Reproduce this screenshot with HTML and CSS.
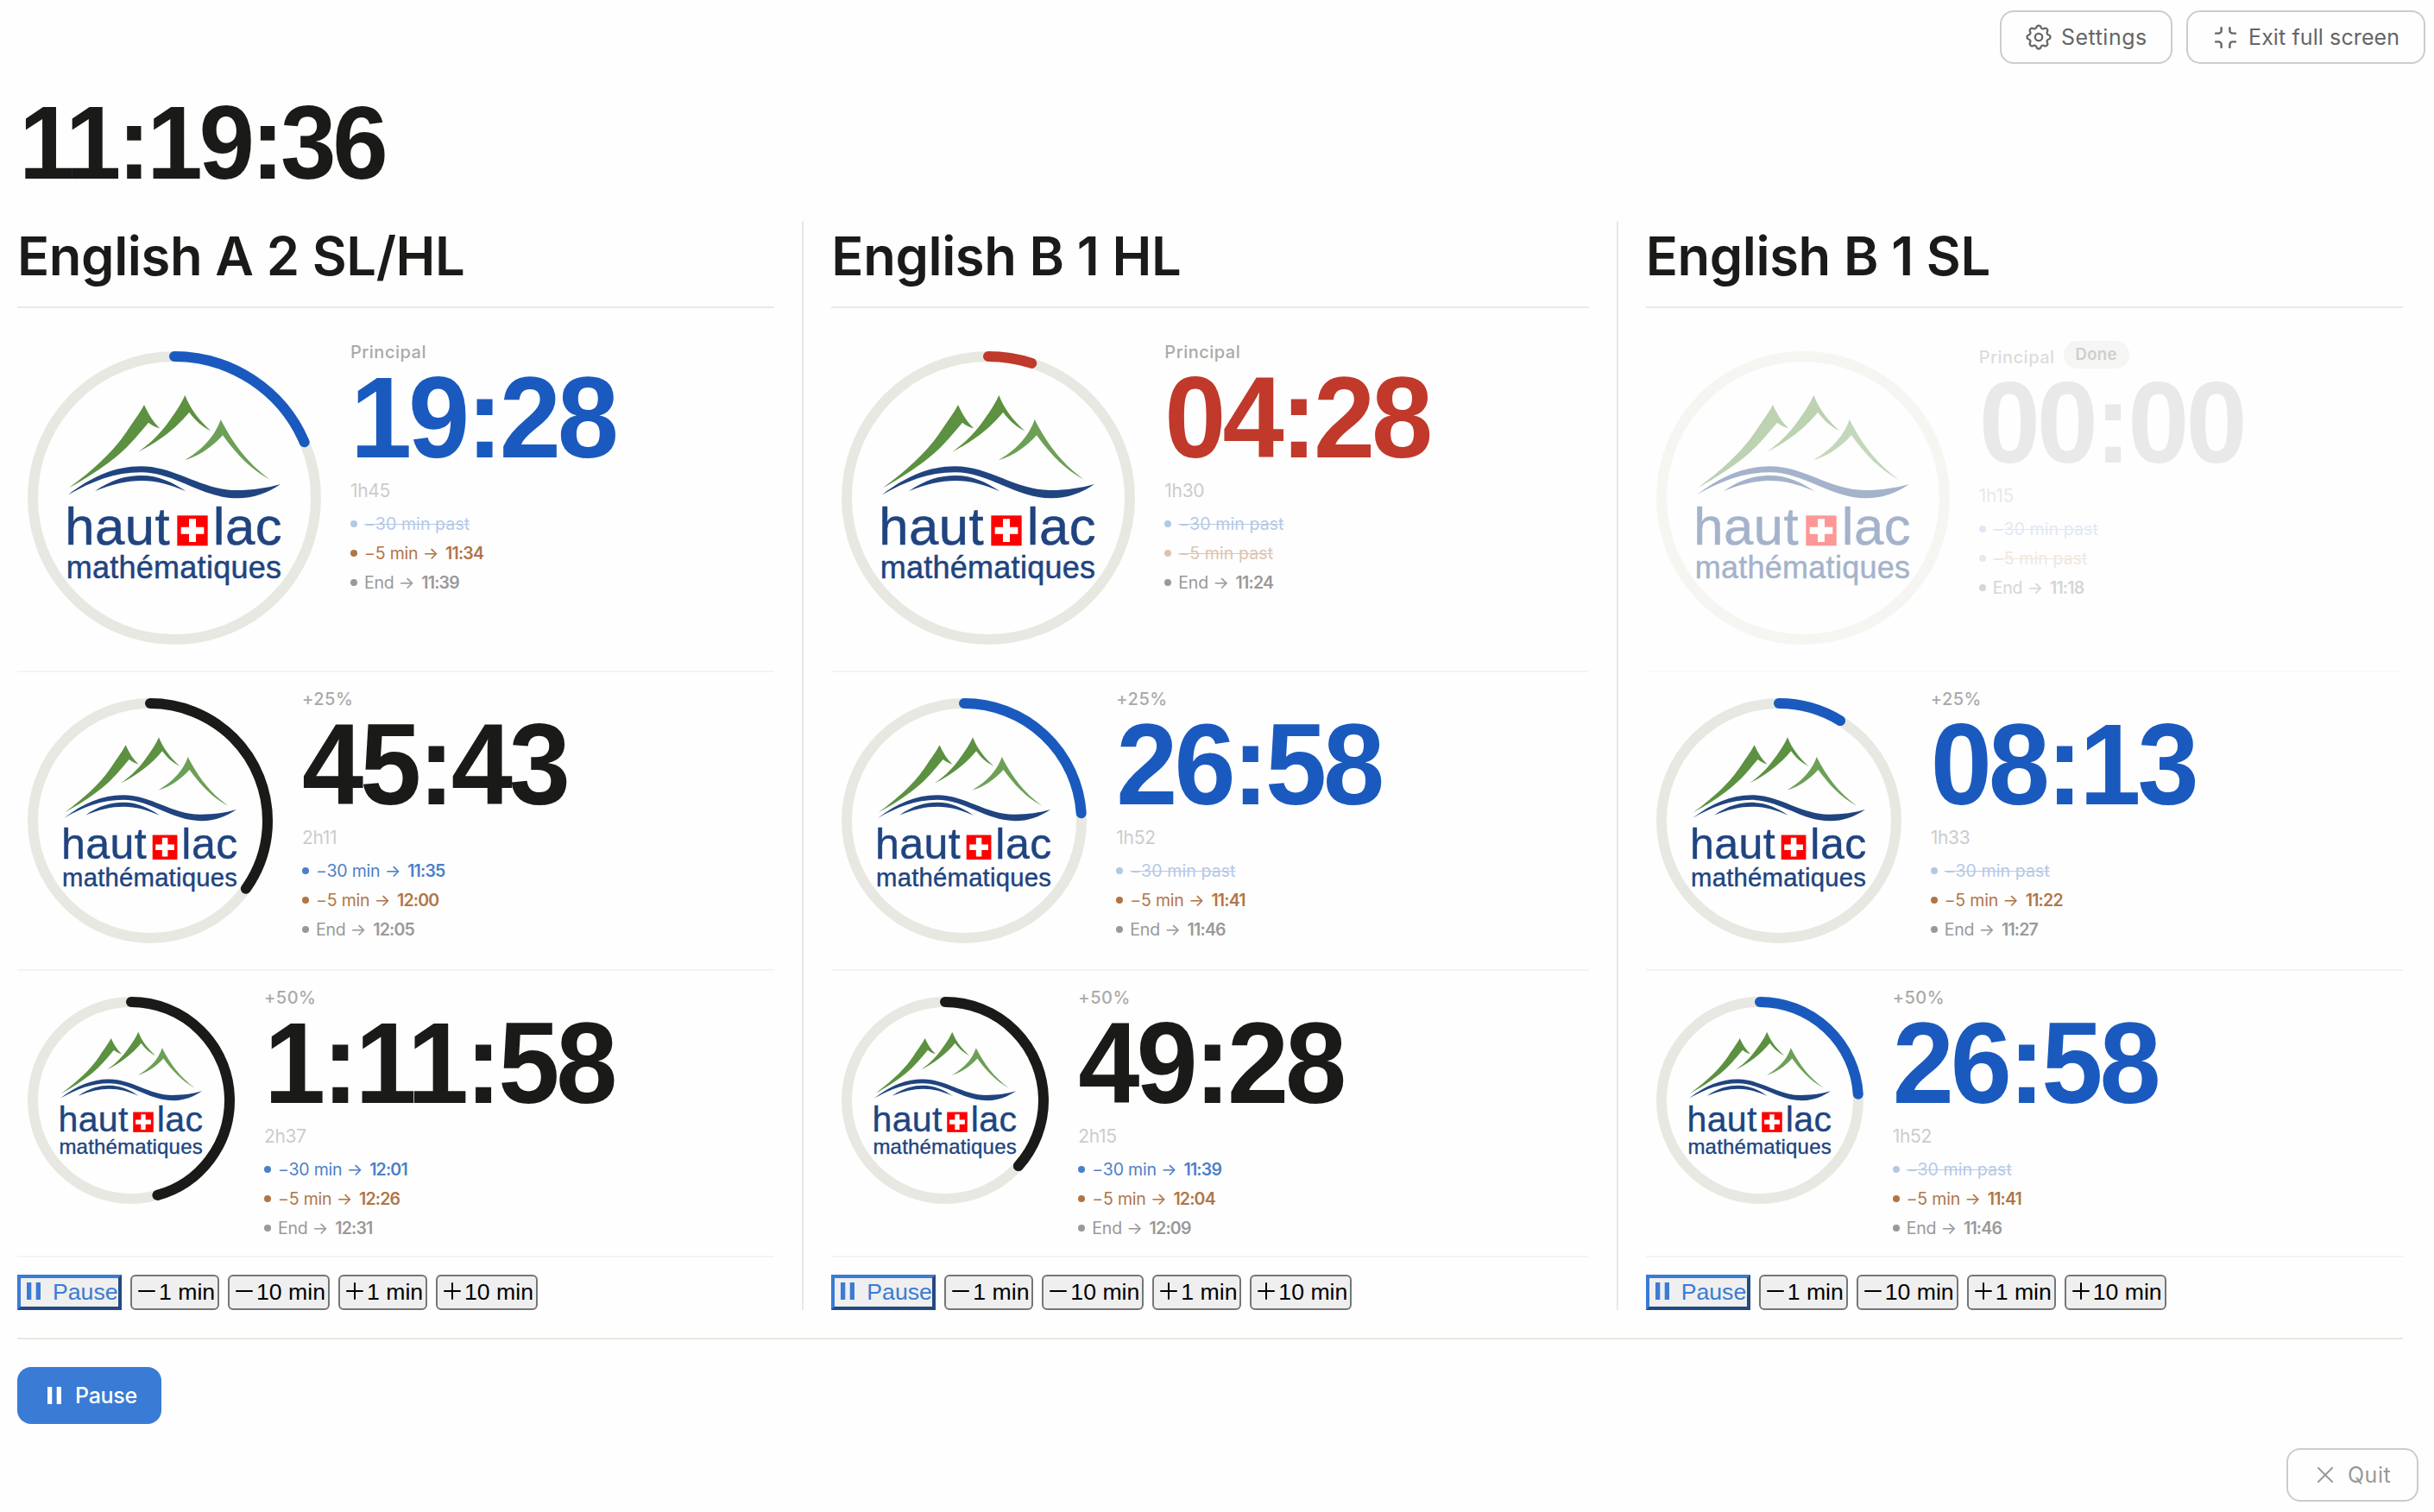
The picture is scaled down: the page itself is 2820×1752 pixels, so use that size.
FILE: index.html
```
<!DOCTYPE html>
<html lang="en">

<head>
<meta charset="utf-8">
<title>Exam Timer</title>
<link rel="stylesheet" href="styles.css">
</head>

<body>

<!-- shared drawings -->
<svg class="defs" width="0" height="0">
  <symbol id="logo" viewBox="156 170 900 900">
    <g fill="#5b9140">
      <path d="M240 585C340 510 400 450 440 390C470 345 488 322 501 296C516 328 532 356 556 378C540 374 528 368 516 358C480 400 450 440 400 480C350 520 300 552 240 585Z"/>
      <path d="M480 460C530 425 560 392 590 350C615 315 630 292 643 263C662 310 690 348 733 387C700 370 678 350 658 322C610 380 550 425 480 460Z"/>
      <path fill="#6da057" d="M641 489C690 460 720 430 742 398C754 380 762 364 767 347C810 430 860 500 939 556C870 520 820 465 774 402C735 445 690 475 641 489Z"/>
    </g>
    <g fill="#204480">
      <path d="M237 609C320 545 400 510 490 510C610 510 700 593 820 593C880 593 930 585 975 572C930 603 880 621 825 621C700 621 610 531 490 531C400 531 320 562 237 609Z"/>
      <path d="M330 596C390 555 440 542 492 542C550 542 600 565 646 597C590 573 545 560 492 560C440 560 390 572 330 596Z"/>
    </g>
    <rect x="616" y="681" width="106" height="105" fill="#f00"/>
    <path d="M657 693h24v28h28v24h-28v28h-24v-28h-28v-24h28z" fill="#fff"/>
    <g class="logo-text">
      <text x="226" y="782" font-size="185" textLength="364">haut</text>
      <text x="740" y="782" font-size="185" textLength="240">lac</text>
      <text x="230" y="899" font-size="108" textLength="748">mathématiques</text>
    </g>
  </symbol>
  <symbol id="pause" viewBox="0 0 16 20">
    <path d="M0 0h5.3v20h-5.3zM10.7 0h5.3v20h-5.3z" fill="currentColor"/>
  </symbol>
  <symbol id="minus" viewBox="0 0 20 20">
    <path d="M1 10h18" fill="none" stroke="currentColor" stroke-width="2" stroke-linecap="round"/>
  </symbol>
  <symbol id="plus" viewBox="0 0 20 20">
    <path d="M1 10h18M10 1v18" fill="none" stroke="currentColor" stroke-width="2" stroke-linecap="round"/>
  </symbol>
</svg>

<div class="topbar">
  <button class="btn">
    <svg class="icon-gear" viewBox="0 0 24 24"><path d="M10.325 4.317c.426 -1.756 2.924 -1.756 3.35 0a1.724 1.724 0 0 0 2.573 1.066c1.543 -.94 3.31 .826 2.37 2.37a1.724 1.724 0 0 0 1.065 2.572c1.756 .426 1.756 2.924 0 3.35a1.724 1.724 0 0 0 -1.066 2.573c.94 1.543 -.826 3.31 -2.37 2.37a1.724 1.724 0 0 0 -2.572 1.065c-.426 1.756 -2.924 1.756 -3.35 0a1.724 1.724 0 0 0 -2.573 -1.066c-1.543 .94 -3.31 -.826 -2.37 -2.37a1.724 1.724 0 0 0 -1.065 -2.572c-1.756 -.426 -1.756 -2.924 0 -3.35a1.724 1.724 0 0 0 1.066 -2.573c-.94 -1.543 .826 -3.31 2.37 -2.37c1 .608 2.296 .07 2.572 -1.065"/><circle cx="12" cy="12" r="2.8"/></svg>
    <span>Settings</span>
  </button>
  <button class="btn btn-exit">
    <svg class="icon-exit" viewBox="0 0 24 24"><path d="M15 19v-2a2 2 0 0 1 2 -2h2M15 5v2a2 2 0 0 0 2 2h2M5 15h2a2 2 0 0 1 2 2v2M5 9h2a2 2 0 0 0 2 -2v-2"/></svg>
    <span>Exit full screen</span>
  </button>
</div>

<div class="clock"><div>11:19:36</div></div>

<div class="board">

  <div class="exam">
    <h2>English A 2 SL/HL</h2>

    <div class="row">
      <svg class="ring" width="364" height="364">
        <circle class="track" cx="182" cy="182" r="164"/>
        <circle class="bar blue" cx="182" cy="182" r="164" pathLength="100" stroke-dasharray="18.54 100" transform="rotate(-90 182 182)"/>
        <use href="#logo" x="32" y="32" width="300" height="300"/>
      </svg>
      <div class="info">
        <div class="label">Principal</div>
        <div class="time blue">19:28</div>
        <div class="total">1h45</div>
        <ul>
          <li class="m30 past"><span>−30 min past</span></li>
          <li class="m5"><span>−5 min →</span> <b>11:34</b></li>
          <li class="end"><span>End →</span> <b>11:39</b></li>
        </ul>
      </div>
    </div>

    <div class="row">
      <svg class="ring" width="308" height="308">
        <circle class="track" cx="154" cy="154" r="136"/>
        <circle class="bar" cx="154" cy="154" r="136" pathLength="100" stroke-dasharray="34.83 100" transform="rotate(-90 154 154)"/>
        <use href="#logo" x="32" y="32" width="244" height="244"/>
      </svg>
      <div class="info">
        <div class="label">+25%</div>
        <div class="time">45:43</div>
        <div class="total">2h11</div>
        <ul>
          <li class="m30"><span>−30 min →</span> <b>11:35</b></li>
          <li class="m5"><span>−5 min →</span> <b>12:00</b></li>
          <li class="end"><span>End →</span> <b>12:05</b></li>
        </ul>
      </div>
    </div>

    <div class="row">
      <svg class="ring" width="264" height="264">
        <circle class="track" cx="132" cy="132" r="114"/>
        <circle class="bar" cx="132" cy="132" r="114" pathLength="100" stroke-dasharray="45.7 100" transform="rotate(-90 132 132)"/>
        <use href="#logo" x="32" y="32" width="200" height="200"/>
      </svg>
      <div class="info">
        <div class="label">+50%</div>
        <div class="time">1:11:58</div>
        <div class="total">2h37</div>
        <ul>
          <li class="m30"><span>−30 min →</span> <b>12:01</b></li>
          <li class="m5"><span>−5 min →</span> <b>12:26</b></li>
          <li class="end"><span>End →</span> <b>12:31</b></li>
        </ul>
      </div>
    </div>

    <div class="controls">
      <button class="pause"><svg width="16" height="20"><use href="#pause"/></svg><span>Pause</span></button>
      <button><svg width="20" height="20"><use href="#minus"/></svg><span>1 min</span></button>
      <button class="ten"><svg width="20" height="20"><use href="#minus"/></svg><span>10 min</span></button>
      <button><svg width="20" height="20"><use href="#plus"/></svg><span>1 min</span></button>
      <button class="ten"><svg width="20" height="20"><use href="#plus"/></svg><span>10 min</span></button>
    </div>
  </div>

  <div class="exam">
    <h2>English B 1 HL</h2>

    <div class="row">
      <svg class="ring" width="364" height="364">
        <circle class="track" cx="182" cy="182" r="164"/>
        <circle class="bar red" cx="182" cy="182" r="164" pathLength="100" stroke-dasharray="4.96 100" transform="rotate(-90 182 182)"/>
        <use href="#logo" x="32" y="32" width="300" height="300"/>
      </svg>
      <div class="info">
        <div class="label">Principal</div>
        <div class="time red">04:28</div>
        <div class="total">1h30</div>
        <ul>
          <li class="m30 past"><span>−30 min past</span></li>
          <li class="m5 past"><span>−5 min past</span></li>
          <li class="end"><span>End →</span> <b>11:24</b></li>
        </ul>
      </div>
    </div>

    <div class="row">
      <svg class="ring" width="308" height="308">
        <circle class="track" cx="154" cy="154" r="136"/>
        <circle class="bar blue" cx="154" cy="154" r="136" pathLength="100" stroke-dasharray="23.97 100" transform="rotate(-90 154 154)"/>
        <use href="#logo" x="32" y="32" width="244" height="244"/>
      </svg>
      <div class="info">
        <div class="label">+25%</div>
        <div class="time blue">26:58</div>
        <div class="total">1h52</div>
        <ul>
          <li class="m30 past"><span>−30 min past</span></li>
          <li class="m5"><span>−5 min →</span> <b>11:41</b></li>
          <li class="end"><span>End →</span> <b>11:46</b></li>
        </ul>
      </div>
    </div>

    <div class="row">
      <svg class="ring" width="264" height="264">
        <circle class="track" cx="132" cy="132" r="114"/>
        <circle class="bar" cx="132" cy="132" r="114" pathLength="100" stroke-dasharray="36.64 100" transform="rotate(-90 132 132)"/>
        <use href="#logo" x="32" y="32" width="200" height="200"/>
      </svg>
      <div class="info">
        <div class="label">+50%</div>
        <div class="time">49:28</div>
        <div class="total">2h15</div>
        <ul>
          <li class="m30"><span>−30 min →</span> <b>11:39</b></li>
          <li class="m5"><span>−5 min →</span> <b>12:04</b></li>
          <li class="end"><span>End →</span> <b>12:09</b></li>
        </ul>
      </div>
    </div>

    <div class="controls">
      <button class="pause"><svg width="16" height="20"><use href="#pause"/></svg><span>Pause</span></button>
      <button><svg width="20" height="20"><use href="#minus"/></svg><span>1 min</span></button>
      <button class="ten"><svg width="20" height="20"><use href="#minus"/></svg><span>10 min</span></button>
      <button><svg width="20" height="20"><use href="#plus"/></svg><span>1 min</span></button>
      <button class="ten"><svg width="20" height="20"><use href="#plus"/></svg><span>10 min</span></button>
    </div>
  </div>

  <div class="exam">
    <h2>English B 1 SL</h2>

    <div class="row done">
      <svg class="ring" width="364" height="364">
        <circle class="track" cx="182" cy="182" r="164"/>
        <use href="#logo" x="32" y="32" width="300" height="300"/>
      </svg>
      <div class="info">
        <div class="label">Principal <span class="badge">Done</span></div>
        <div class="time">00:00</div>
        <div class="total">1h15</div>
        <ul>
          <li class="m30 past"><span>−30 min past</span></li>
          <li class="m5 past"><span>−5 min past</span></li>
          <li class="end"><span>End →</span> <b>11:18</b></li>
        </ul>
      </div>
    </div>

    <div class="row">
      <svg class="ring" width="308" height="308">
        <circle class="track" cx="154" cy="154" r="136"/>
        <circle class="bar blue" cx="154" cy="154" r="136" pathLength="100" stroke-dasharray="8.76 100" transform="rotate(-90 154 154)"/>
        <use href="#logo" x="32" y="32" width="244" height="244"/>
      </svg>
      <div class="info">
        <div class="label">+25%</div>
        <div class="time blue">08:13</div>
        <div class="total">1h33</div>
        <ul>
          <li class="m30 past"><span>−30 min past</span></li>
          <li class="m5"><span>−5 min →</span> <b>11:22</b></li>
          <li class="end"><span>End →</span> <b>11:27</b></li>
        </ul>
      </div>
    </div>

    <div class="row">
      <svg class="ring" width="264" height="264">
        <circle class="track" cx="132" cy="132" r="114"/>
        <circle class="bar blue" cx="132" cy="132" r="114" pathLength="100" stroke-dasharray="23.97 100" transform="rotate(-90 132 132)"/>
        <use href="#logo" x="32" y="32" width="200" height="200"/>
      </svg>
      <div class="info">
        <div class="label">+50%</div>
        <div class="time blue">26:58</div>
        <div class="total">1h52</div>
        <ul>
          <li class="m30 past"><span>−30 min past</span></li>
          <li class="m5"><span>−5 min →</span> <b>11:41</b></li>
          <li class="end"><span>End →</span> <b>11:46</b></li>
        </ul>
      </div>
    </div>

    <div class="controls">
      <button class="pause"><svg width="16" height="20"><use href="#pause"/></svg><span>Pause</span></button>
      <button><svg width="20" height="20"><use href="#minus"/></svg><span>1 min</span></button>
      <button class="ten"><svg width="20" height="20"><use href="#minus"/></svg><span>10 min</span></button>
      <button><svg width="20" height="20"><use href="#plus"/></svg><span>1 min</span></button>
      <button class="ten"><svg width="20" height="20"><use href="#plus"/></svg><span>10 min</span></button>
    </div>
  </div>

</div>

<div class="global">
  <button class="pause-all"><svg width="16" height="20"><use href="#pause"/></svg><span>Pause</span></button>
</div>

<div class="bottombar">
  <button class="btn btn-quit">
    <svg class="icon-x" viewBox="0 0 18 18"><path d="M1 1l16 16M17 1l-16 16"/></svg>
    <span>Quit</span>
  </button>
</div>

</body>
</html>
```
FILE: styles.css
```
* {
  box-sizing: border-box;
}
body {
  margin: 0;
  background: #fefefe;
  color: #1a1a18;
  font-family: Inter, "Liberation Sans", sans-serif;
}
.defs {
  position: absolute;
}
.logo-text {
  fill: #204480;
  stroke: #204480;
  stroke-width: 1.5;
  font-family: "Liberation Sans", Arial, sans-serif;
}

/* top and bottom buttons */
.topbar {
  display: flex;
  justify-content: flex-end;
  gap: 16px;
  padding: 12px 10px 0;
}
.btn {
  display: flex;
  align-items: center;
  width: 200px;
  height: 62px;
  padding: 0 0 0 25px;
  border: 2px solid #ccc;
  border-radius: 16px;
  background: none;
  color: #666;
  font-family: inherit;
  font-size: 25px;
  letter-spacing: 0.5px;
  white-space: nowrap;
}
.btn svg {
  fill: none;
  stroke: currentColor;
  stroke-width: 1.5;
  stroke-linecap: round;
  stroke-linejoin: round;
}
.icon-gear {
  width: 36px;
  height: 36px;
  margin-right: 8px;
}
.btn-exit {
  width: 277px;
  padding-left: 24px;
  letter-spacing: 0.1px;
}
.icon-exit {
  width: 39px;
  height: 39px;
  margin-right: 7px;
}
.bottombar {
  display: flex;
  justify-content: flex-end;
  padding: 28px 18px 0;
}
.btn-quit {
  width: 153px;
  padding-left: 34px;
  color: #999;
}
.btn .icon-x {
  width: 18px;
  height: 18px;
  margin-right: 17px;
  stroke-width: 2;
}

.clock {
  padding: 33px 22px;
  font-family: "Liberation Sans", Arial, sans-serif;
  font-size: 116px;
  font-weight: bold;
  line-height: 116px;
  letter-spacing: -4.3px;
}
.clock div {
  transform: scaleY(1.045);
}

/* columns */
.board {
  display: flex;
  margin: 0 36px 0 20px;
}
.exam {
  box-sizing: content-box;
  flex: 1 1 0;
  padding-right: 32px;
  border-right: 2px solid #e8e8e6;
}
.exam + .exam {
  padding-left: 32px;
}
.exam:last-child {
  padding-right: 0;
  border-right: 0;
}
.exam h2 {
  margin: 0 0 20px;
  padding-bottom: 18px;
  border-bottom: 2px solid #e8e8e6;
  font-size: 61.5px;
  font-weight: 600;
  line-height: 81px;
  letter-spacing: -0.4px;
  white-space: nowrap;
}
.row {
  display: flex;
  align-items: flex-start;
  gap: 22px;
  padding: 18px 0;
  border-bottom: 2px solid #f4f4f4;
}
.done {
  opacity: 0.4;
}

/* progress ring */
.ring {
  flex: none;
}
.track,
.bar {
  fill: none;
  stroke-width: 12;
}
.track {
  stroke: #e8e8e2;
}
.bar {
  stroke: #1a1a18;
  stroke-linecap: round;
}
.bar.blue {
  stroke: #1a5abf;
}
.bar.red {
  stroke: #c0392b;
}

/* timer text */
.label {
  display: flex;
  height: 25px;
  color: #aaa;
  font-size: 20px;
  font-weight: 500;
  line-height: 26px;
  letter-spacing: 0.5px;
}
.time {
  font-family: "Liberation Sans", Arial, sans-serif;
  font-size: 128px;
  font-weight: bold;
  line-height: 128px;
  letter-spacing: -4.1px;
  transform: scaleY(1.045);
}
.time.blue {
  color: #1a5abf;
}
.time.red {
  color: #c0392b;
}
.total {
  margin: 6px 0 9px;
  color: #ccc;
  font-size: 21px;
  line-height: 30px;
  letter-spacing: -0.3px;
}
.info ul {
  display: flex;
  flex-direction: column;
  gap: 6px;
  margin: 0;
  padding: 0;
  list-style: none;
}
.info li {
  display: flex;
  align-items: center;
  height: 28px;
  font-size: 19.5px;
  letter-spacing: -0.2px;
}
.info li::before {
  content: "";
  width: 8px;
  height: 8px;
  margin-right: 8px;
  border-radius: 50%;
  background: currentColor;
}
.info b {
  margin-left: 8px;
  font-weight: 600;
  letter-spacing: -0.8px;
}
.m30 {
  color: #4d7fc8;
}
.m5 {
  color: #b07547;
}
.end {
  color: #999;
}
.past {
  opacity: 0.42;
}
.past span {
  letter-spacing: 0.1px;
  text-decoration: line-through;
}
.done .label {
  height: 31px;
  line-height: 38px;
}
.done .time {
  color: #ccc;
}
.badge {
  height: 32px;
  margin-left: 10px;
  padding: 0 14px;
  border-radius: 16px;
  background: #e8e8e4;
  color: #888;
  font-size: 18.5px;
  font-weight: 600;
  line-height: 31px;
  letter-spacing: 0.3px;
}

/* per exam buttons */
.controls {
  display: flex;
  gap: 10px;
  margin-top: 20px;
}
.controls button {
  display: flex;
  align-items: center;
  width: 103px;
  height: 41px;
  padding: 0 0 0 7px;
  border: 2px solid #767676;
  border-radius: 6px;
  background: #efefef;
  color: #000;
  font-family: "Liberation Sans", Arial, sans-serif;
  font-size: 26.67px;
  white-space: nowrap;
}
.controls svg {
  flex: none;
  margin-top: -3px;
  margin-right: 4px;
}
.controls .ten {
  width: 118px;
}
.controls .pause {
  width: 121px;
  border: 4px outset #3a7bd5;
  border-radius: 0;
  color: #3a7bd5;
}
.controls .pause svg {
  margin-right: 14px;
}

.global {
  margin: 32px 36px 0 20px;
  padding-top: 32px;
  border-top: 2px solid #e8e8e0;
}
.pause-all {
  display: flex;
  align-items: center;
  width: 167px;
  height: 66px;
  padding: 0 0 0 35px;
  border: 0;
  border-radius: 16px;
  background: #3a7bd5;
  color: #fff;
  font-family: inherit;
  font-size: 25px;
  font-weight: 500;
  letter-spacing: -0.3px;
}
.pause-all svg {
  margin-right: 16px;
}
```
